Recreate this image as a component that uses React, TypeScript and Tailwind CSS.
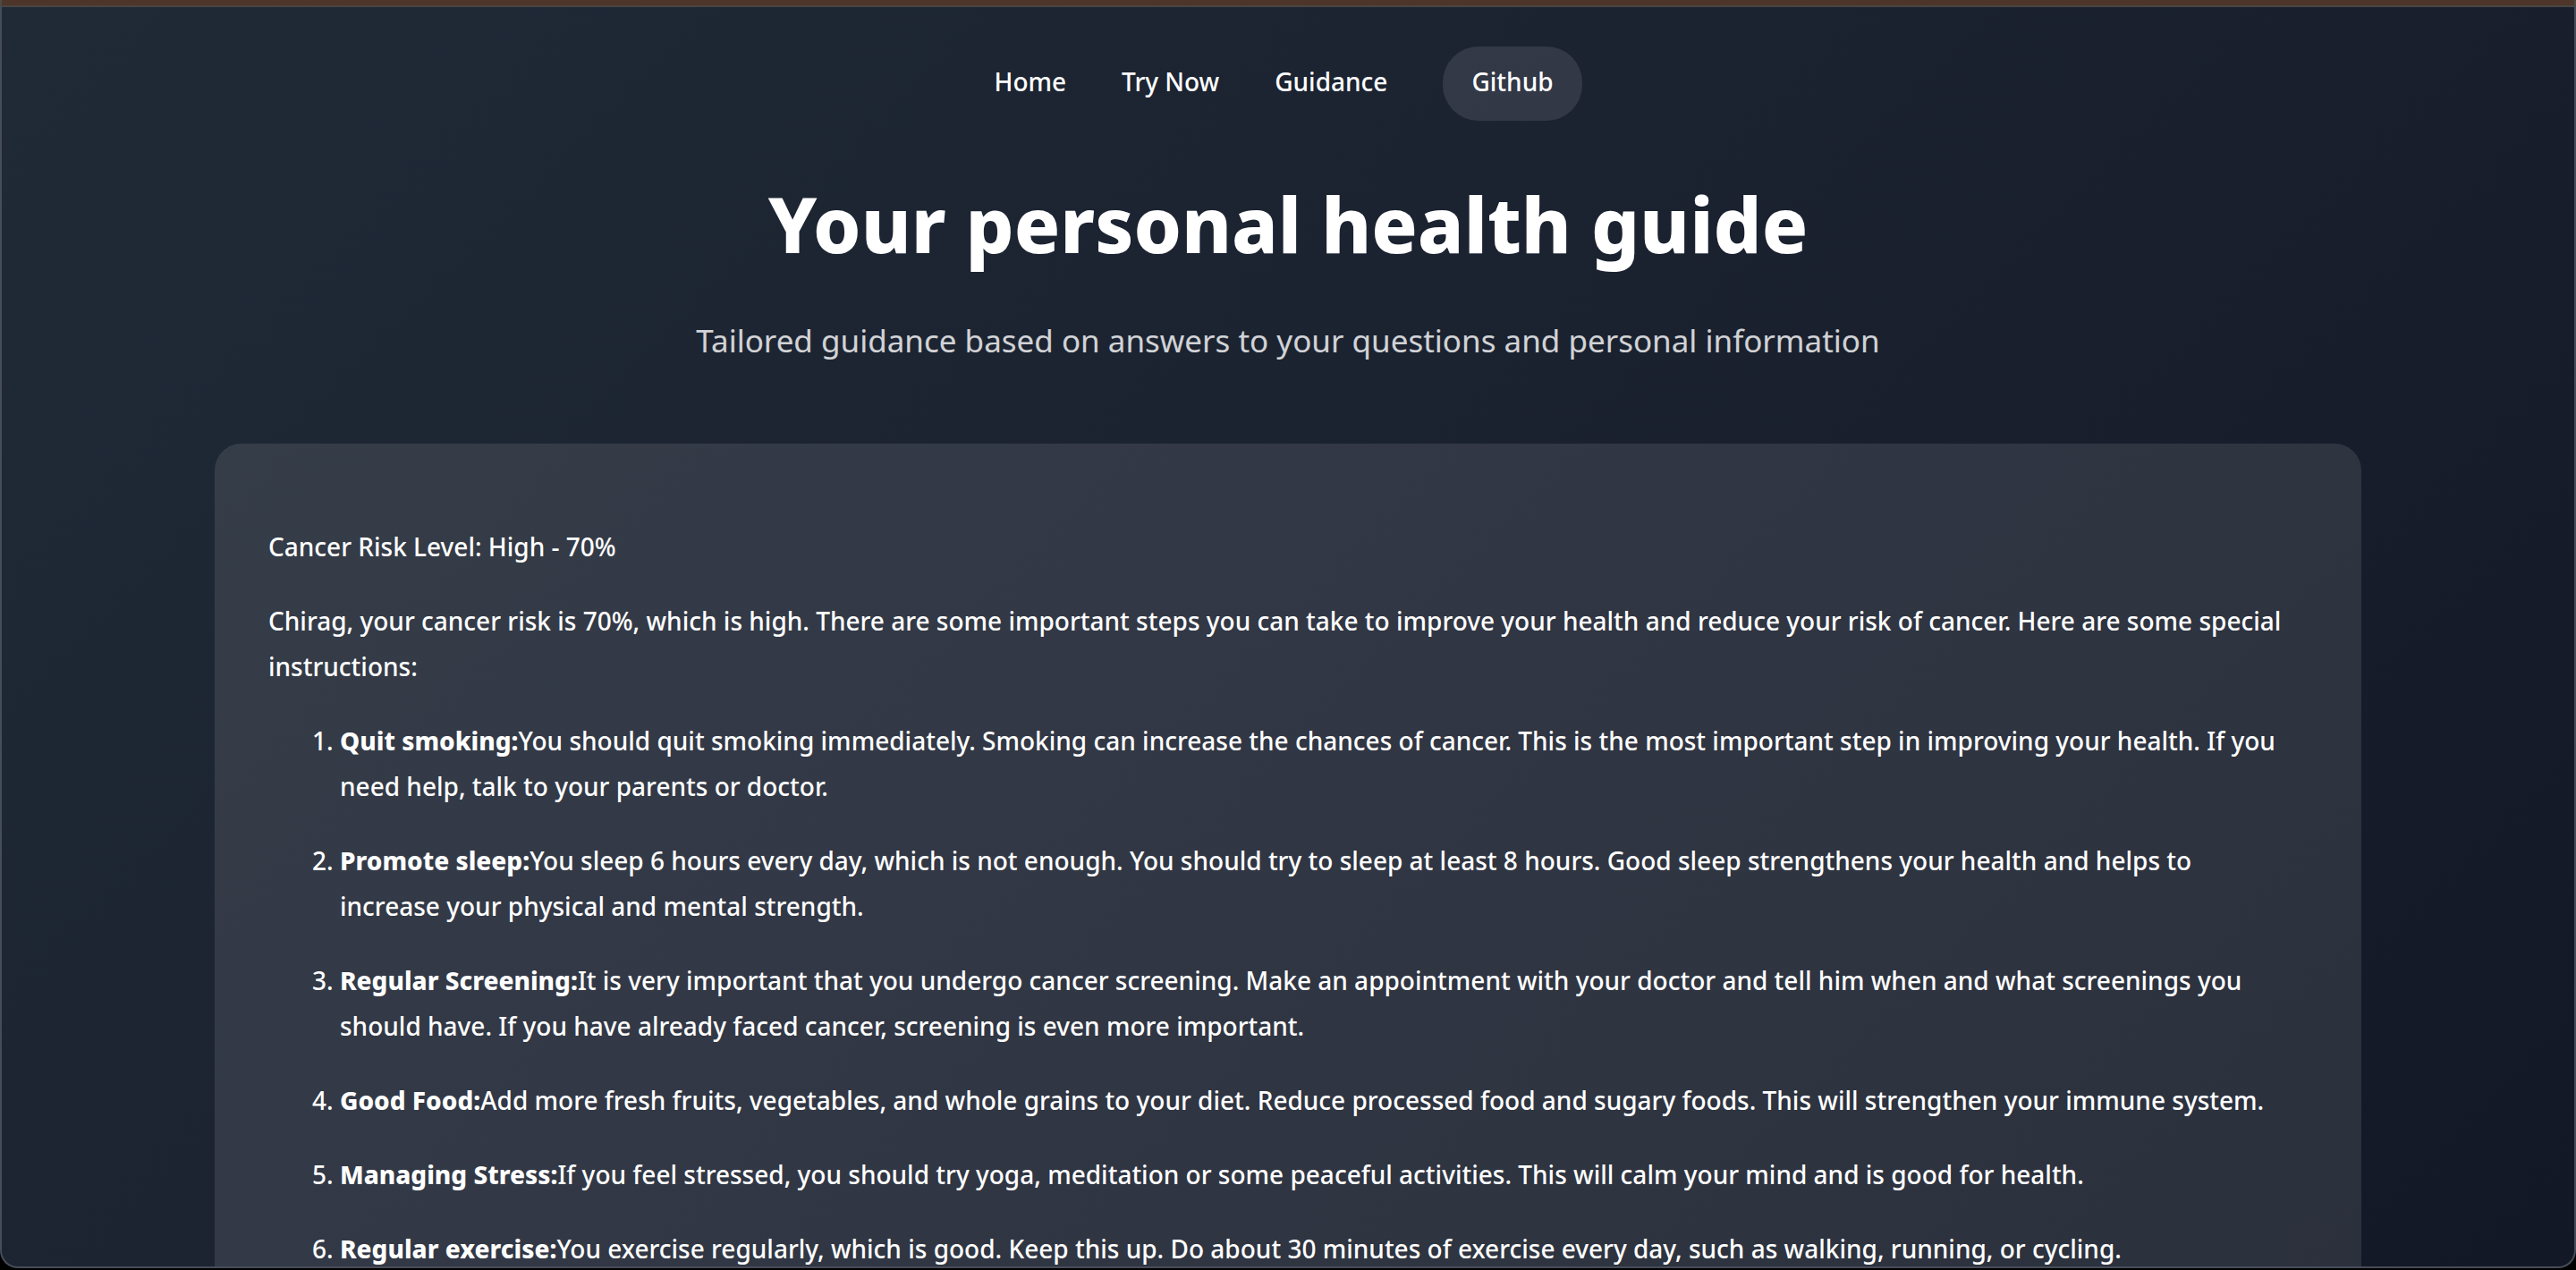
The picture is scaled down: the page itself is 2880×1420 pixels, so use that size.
const links = ["Home", "Try Now", "Guidance"];

const advice = [
  {
    title: "Quit smoking:",
    text: "You should quit smoking immediately. Smoking can increase the chances of cancer. This is the most important step in improving your health. If you need help, talk to your parents or doctor.",
  },
  {
    title: "Promote sleep:",
    text: "You sleep 6 hours every day, which is not enough. You should try to sleep at least 8 hours. Good sleep strengthens your health and helps to increase your physical and mental strength.",
  },
  {
    title: "Regular Screening:",
    text: "It is very important that you undergo cancer screening. Make an appointment with your doctor and tell him when and what screenings you should have. If you have already faced cancer, screening is even more important.",
  },
  {
    title: "Good Food:",
    text: "Add more fresh fruits, vegetables, and whole grains to your diet. Reduce processed food and sugary foods. This will strengthen your immune system.",
  },
  {
    title: "Managing Stress:",
    text: "If you feel stressed, you should try yoga, meditation or some peaceful activities. This will calm your mind and is good for health.",
  },
  {
    title: "Regular exercise:",
    text: "You exercise regularly, which is good. Keep this up. Do about 30 minutes of exercise every day, such as walking, running, or cycling.",
  },
];

function NavBar() {
  return (
    <nav className="flex items-center justify-center gap-[62px]">
      {links.map((label) => (
        <a key={label} href="#" className="pt-3.5 pb-4.5">
          {label}
        </a>
      ))}
      <a href="#" className="rounded-[40px] bg-white/10 px-8 pt-3.5 pb-4.5">
        Github
      </a>
    </nav>
  );
}

export default function App() {
  return (
    <div className="flex h-screen flex-col bg-black pb-0.5 font-['Noto_Sans',sans-serif] text-[28px] leading-[51px] font-medium text-white">
      <div className="h-1.5 shrink-0 border-x-2 border-[#4f4a45] bg-[#4d3629]" />
      <div className="min-h-0 flex-1 overflow-hidden rounded-b-[20px] border-2 border-[#464d58] border-t-[#494541] bg-linear-135 from-[#202a37] via-[#1b2230] via-45% to-[#131826]">
        <header className="pt-11 text-center">
          <NavBar />
          <h1 className="mt-16 text-[85px] leading-[102px] font-extrabold">Your personal health guide</h1>
          <p className="mt-13 text-[35px] leading-14 font-normal text-white/80">
            Tailored guidance based on answers to your questions and personal information
          </p>
        </header>
        <main className="mx-auto mt-[87px] w-11/12 max-w-[2400px] rounded-[30px] bg-white/10 px-15 pt-[90px] pb-15">
          <p>Cancer Risk Level: High - 70%</p>
          <p className="mt-8">
            Chirag, your cancer risk is 70%, which is high. There are some important steps you can take to improve your
            health and reduce your risk of cancer. Here are some special instructions:
          </p>
          <ol className="mt-8 list-decimal space-y-8 pr-6 pl-20">
            {advice.map(({ title, text }) => (
              <li key={title}>
                <strong className="font-extrabold">{title}</strong>
                {text}
              </li>
            ))}
          </ol>
        </main>
      </div>
    </div>
  );
}
